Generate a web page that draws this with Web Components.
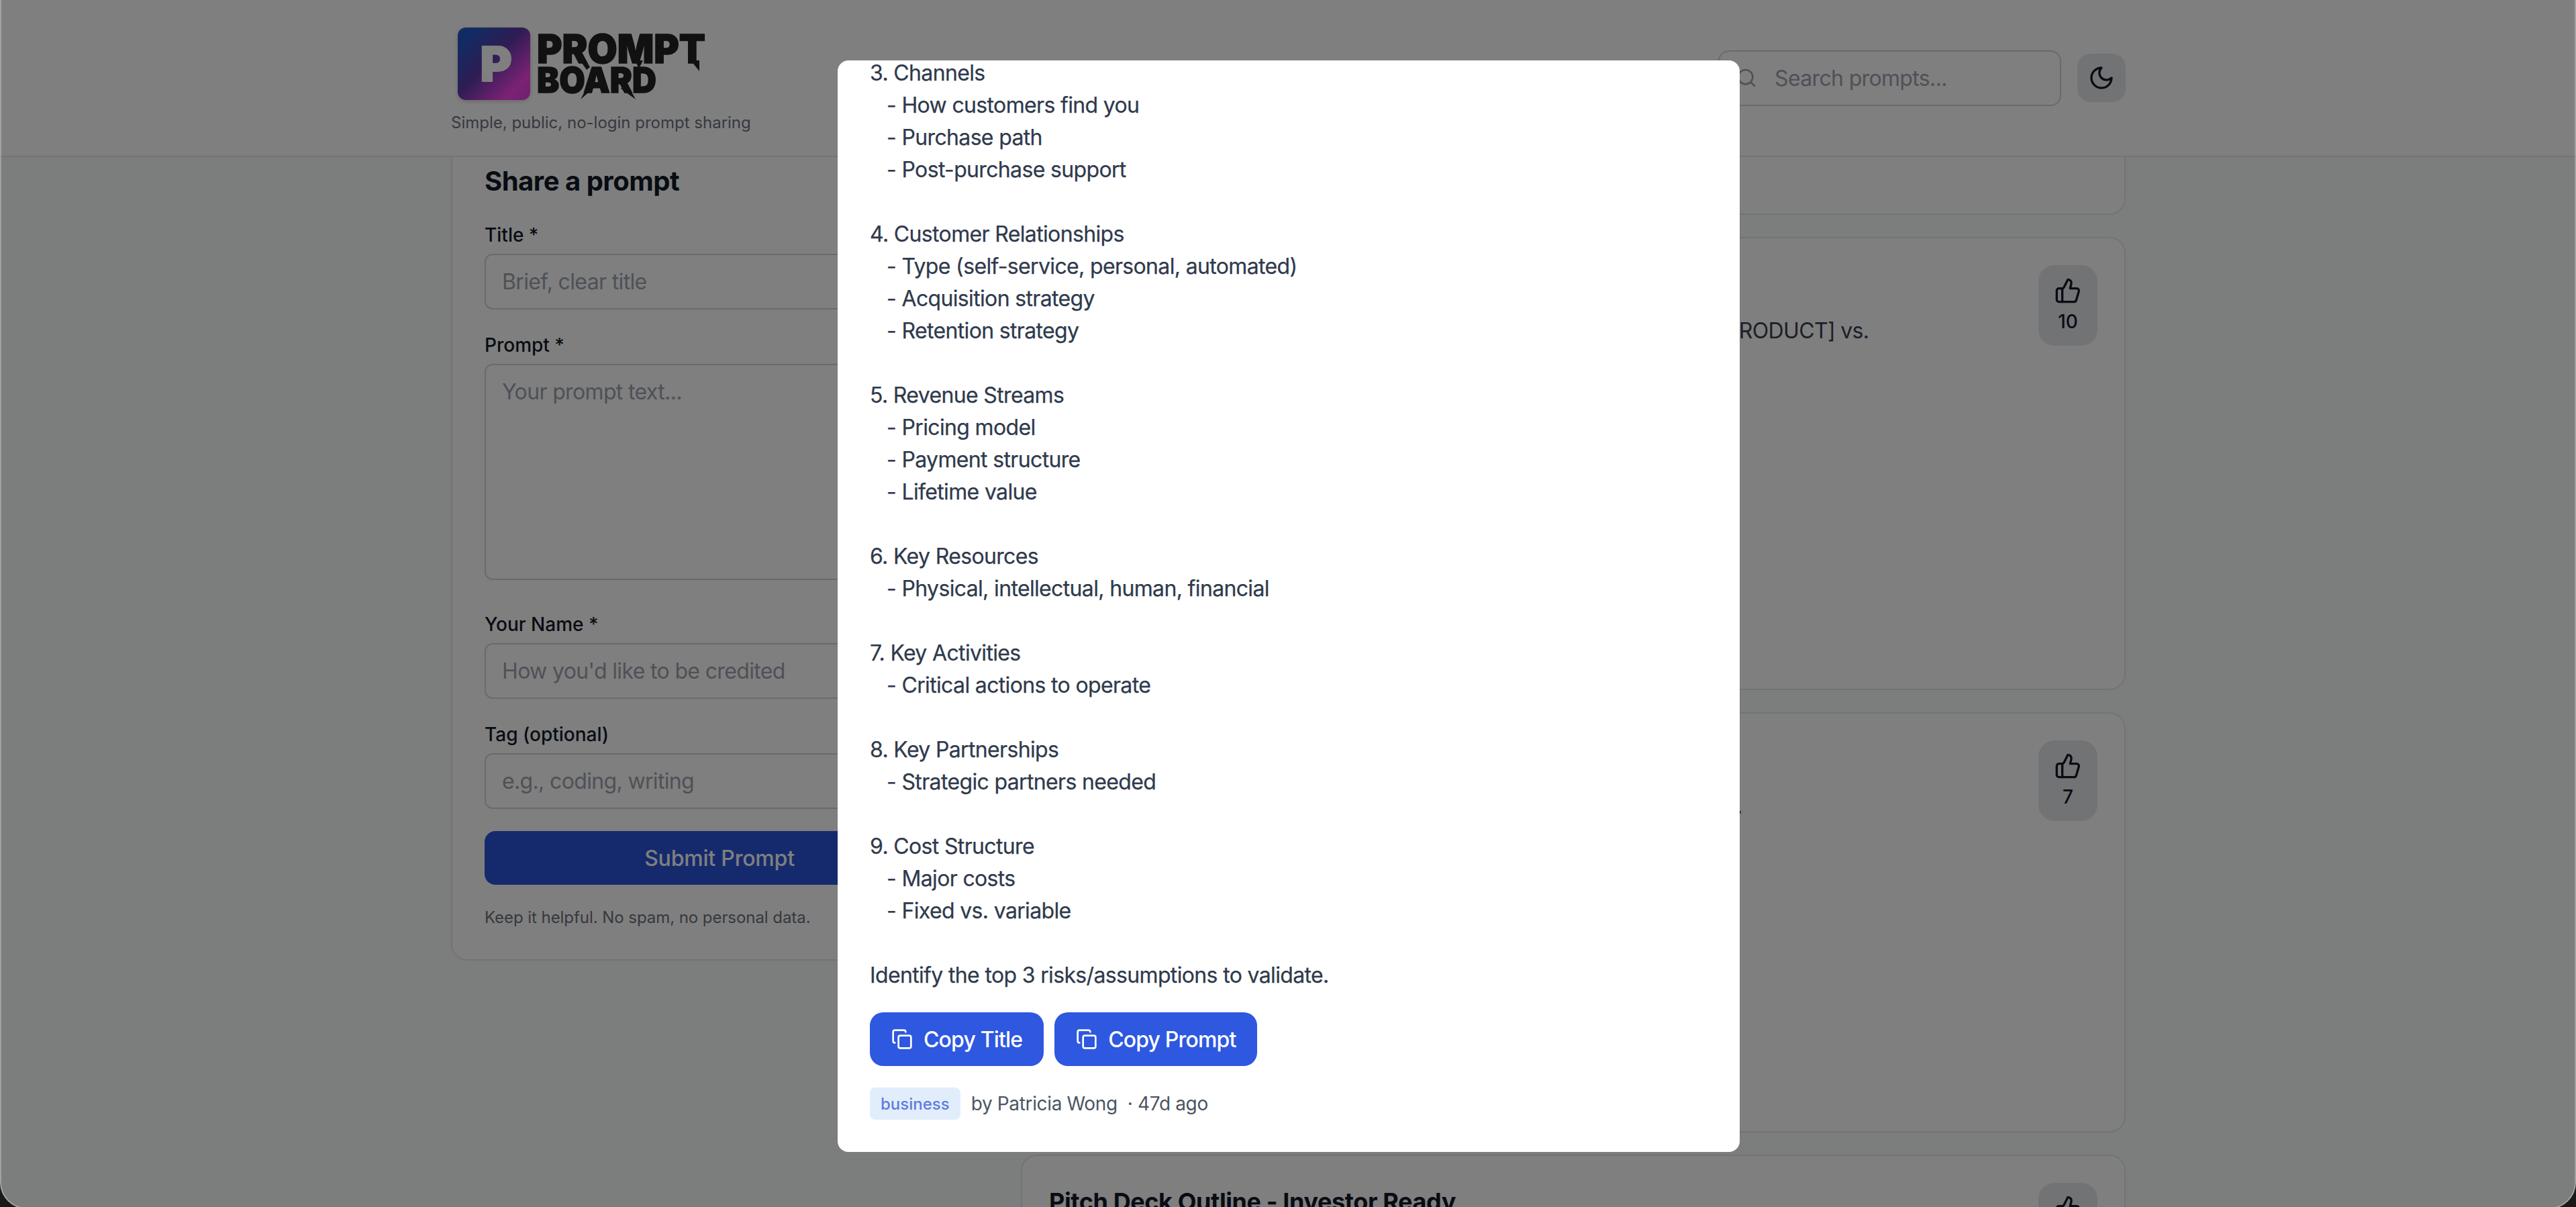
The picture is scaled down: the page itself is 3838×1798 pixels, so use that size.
<!DOCTYPE html>
<html lang="en">
<head>
<meta charset="utf-8">
<title>Prompt Board</title>
<style>
  html, body { margin: 0; height: 100%; overflow: hidden; }
  body { position: relative; background: #f9fafb; color: #111827; font-family: Inter, "Liberation Sans", sans-serif; }
</style>
</head>
<body>
  <app-header></app-header>
  <app-main>
    <share-form slot="side"></share-form>
    <prompt-card height="128"></prompt-card>
    <prompt-card height="675" votes="10" indent="997" text="[PRODUCT] vs."></prompt-card>
    <prompt-card height="626" votes="7" indent="1024" text="."></prompt-card>
    <prompt-card height="400" title="Pitch Deck Outline - Investor Ready" votes=""></prompt-card>
  </app-main>
  <prompt-modal tag="business" author="Patricia Wong" age="47d ago">3. Channels
   - How customers find you
   - Purchase path
   - Post-purchase support

4. Customer Relationships
   - Type (self-service, personal, automated)
   - Acquisition strategy
   - Retention strategy

5. Revenue Streams
   - Pricing model
   - Payment structure
   - Lifetime value

6. Key Resources
   - Physical, intellectual, human, financial

7. Key Activities
   - Critical actions to operate

8. Key Partnerships
   - Strategic partners needed

9. Cost Structure
   - Major costs
   - Fixed vs. variable

Identify the top 3 risks/assumptions to validate.</prompt-modal>
  <window-frame></window-frame>

<script>
// Lucide style icons shared by the components
const svgIcon = (size, body, width = 2) => `<svg xmlns="http://www.w3.org/2000/svg" width="${size}" height="${size}" viewBox="0 0 24 24" fill="none" stroke="currentColor" stroke-width="${width}" stroke-linecap="round" stroke-linejoin="round">${body}</svg>`;
const ICONS = {
  search: '<circle cx="11" cy="11" r="8"/><path d="m21 21-4.3-4.3"/>',
  moon: '<path d="M12 3a6 6 0 0 0 9 9 9 9 0 1 1-9-9Z"/>',
  thumb: '<path d="M7 10v12"/><path d="M15 5.88 14 10h5.83a2 2 0 0 1 1.92 2.56l-2.33 8A2 2 0 0 1 17.5 22H4a2 2 0 0 1-2-2v-8a2 2 0 0 1 2-2h2.76a2 2 0 0 0 1.79-1.11L12 2a3.13 3.13 0 0 1 3 3.88Z"/>',
  copy: '<rect width="14" height="14" x="8" y="8" rx="2" ry="2"/><path d="M4 16c-1.1 0-2-.9-2-2V4c0-1.1.9-2 2-2h10c1.1 0 2 .9 2 2"/>'
};

const logoTemplate = document.createElement('template');
logoTemplate.innerHTML = `
<style>
  :host { display: flex; align-items: flex-start; gap: 10px; margin-left: 10px; height: 108px; }
  .tile {
    box-sizing: border-box; width: 108px; height: 108px; border-radius: 12px; padding-left: 6px;
    background: linear-gradient(135deg, #2358c8 12%, #5a3aa8 45%, #f844ea 82%, #e040e0);
    box-shadow: 0 2px 6px rgba(0,0,0,.18);
    display: flex; align-items: center; justify-content: center;
    color: #fff; font: 900 72px/1 Inter, sans-serif;
    -webkit-text-stroke: 2px #fff;
  }
  svg { display: block; margin: -20px 0; flex: none; }
  text { font-family: Inter, sans-serif; font-weight: 900; fill: #222; stroke: #222; }
</style>
<div class="tile">P</div>
<svg width="256" height="148" viewBox="800 21 256 148">
  <text x="800" y="94" font-size="59" stroke-width="1.5" textLength="251" lengthAdjust="spacingAndGlyphs">PROMPT</text>
  <text x="800" y="138" font-size="52" stroke-width="1.5" textLength="178" lengthAdjust="spacingAndGlyphs">BOARD</text>
  <polygon points="856,78 866,78 879,100 874,104" fill="#222"/>
  <polygon points="946,90 958,90 952,102" fill="#222"/>
  <polygon points="1029,90 1042,90 1042,106" fill="#222"/>
  <polygon points="880,120 888,128 865,148" fill="#222"/>
  <polygon points="925,132 935,126 947,148" fill="#222"/>
</svg>
`;
class BrandLogo extends HTMLElement {
  constructor() {
    super();
    this.attachShadow({ mode: 'open' }).appendChild(logoTemplate.content.cloneNode(true));
  }
}
customElements.define('brand-logo', BrandLogo);

const searchTemplate = document.createElement('template');
searchTemplate.innerHTML = `
<style>
  :host { display: block; position: relative; width: 511px; height: 83px; }
  input {
    box-sizing: border-box; width: 100%; height: 100%; padding: 0 24px 0 82px;
    border: 2px solid #d1d5db; border-radius: 16px; background: #fff;
    font: 32px Inter, sans-serif; letter-spacing: -.65px; color: #111827; outline: none;
  }
  input::placeholder { color: #9ca3af; opacity: 1; }
  span { position: absolute; left: 26px; top: 25px; color: #9ca3af; display: flex; }
</style>
<span>${svgIcon(32, ICONS.search)}</span>
<input type="text" placeholder="Search prompts...">
`;
class SearchBox extends HTMLElement {
  constructor() {
    super();
    this.attachShadow({ mode: 'open' }).appendChild(searchTemplate.content.cloneNode(true));
  }
}
customElements.define('search-box', SearchBox);

const headerTemplate = document.createElement('template');
headerTemplate.innerHTML = `
<style>
  /* the header stays on top while the page scrolls under it */
  :host {
    display: block; position: absolute; top: 0; left: 0; right: 0; z-index: 10;
    height: 232px; background: #fff; border-bottom: 2px solid #e5e7eb;
  }
  .inner {
    box-sizing: border-box; width: 2560px; height: 100%; margin: 0 auto; padding: 0 32px 0 33px;
    display: flex; justify-content: space-between; align-items: center;
  }
  .brand { padding-top: 41px; align-self: flex-start; }
  p { margin: 16px 0 0; font-size: 24px; line-height: 36px; color: #6b7280; }
  .tools { display: flex; align-items: center; gap: 24px; }
  button {
    width: 72px; height: 72px; border: 0; border-radius: 20px; padding: 0;
    background: #e5e7eb; color: #111827;
    display: flex; align-items: center; justify-content: center;
  }
</style>
<div class="inner">
  <div class="brand">
    <brand-logo></brand-logo>
    <p>Simple, public, no-login prompt sharing</p>
  </div>
  <div class="tools">
    <search-box></search-box>
    <button aria-label="Toggle theme">${svgIcon(40, ICONS.moon)}</button>
  </div>
</div>
`;
class AppHeader extends HTMLElement {
  constructor() {
    super();
    this.attachShadow({ mode: 'open' }).appendChild(headerTemplate.content.cloneNode(true));
  }
}
customElements.define('app-header', AppHeader);

const mainTemplate = document.createElement('template');
mainTemplate.innerHTML = `
<style>
  :host {
    display: block; box-sizing: border-box; width: 2560px; margin: 0 auto;
    padding: 192px 32px 0 33px;
  }
  .grid { display: grid; grid-template-columns: 800px 1646px; column-gap: 49px; align-items: start; }
  .list { display: flex; flex-direction: column; gap: 33px; }
</style>
<div class="grid">
  <slot name="side"></slot>
  <div class="list"><slot></slot></div>
</div>
`;
class AppMain extends HTMLElement {
  constructor() {
    super();
    this.attachShadow({ mode: 'open' }).appendChild(mainTemplate.content.cloneNode(true));
  }
}
customElements.define('app-main', AppMain);

const fieldTemplate = document.createElement('template');
fieldTemplate.innerHTML = `
<style>
  :host { display: block; }
  label { display: block; font-size: 28px; line-height: 40px; font-weight: 500; color: #111827; margin-bottom: 8px; }
  input, textarea {
    box-sizing: border-box; display: block; width: 100%; margin: 0;
    border: 2px solid #d1d5db; border-radius: 12px; background: #fff;
    padding: 0 24px; font: 32px/39px Inter, sans-serif; letter-spacing: -.65px; color: #111827; outline: none; resize: none;
  }
  input { height: 83px; }
  textarea { height: 322px; padding-top: 20px; }
  ::placeholder { color: #9ca3af; opacity: 1; }
</style>
<label></label>
`;
class FormField extends HTMLElement {
  constructor() {
    super();
    const shadow = this.attachShadow({ mode: 'open' });
    shadow.appendChild(fieldTemplate.content.cloneNode(true));
    shadow.querySelector('label').textContent = this.getAttribute('label');
    const control = document.createElement(this.hasAttribute('multiline') ? 'textarea' : 'input');
    control.placeholder = this.getAttribute('placeholder');
    shadow.appendChild(control);
  }
}
customElements.define('form-field', FormField);

const formTemplate = document.createElement('template');
formTemplate.innerHTML = `
<style>
  :host {
    display: block; box-sizing: border-box; height: 1239px; padding: 48px;
    background: #fff; border: 2px solid #e5e7eb; border-radius: 24px;
  }
  h2 { margin: 0 0 32px; font-size: 40px; line-height: 56px; font-weight: 700; color: #111827; letter-spacing: -.5px; }
  form { display: flex; flex-direction: column; gap: 33px; }
  form-field[multiline] { margin-bottom: 13px; }
  button {
    height: 80px; border: 0; border-radius: 16px; background: #2a54da; color: #fff;
    font: 500 32px Inter, sans-serif; letter-spacing: -.2px;
  }
  p { margin: 0; font-size: 24px; line-height: 32px; color: #6b7280; letter-spacing: -.06px; }
</style>
<h2>Share a prompt</h2>
<form>
  <form-field label="Title *" placeholder="Brief, clear title"></form-field>
  <form-field label="Prompt *" placeholder="Your prompt text..." multiline></form-field>
  <form-field label="Your Name *" placeholder="How you'd like to be credited"></form-field>
  <form-field label="Tag (optional)" placeholder="e.g., coding, writing"></form-field>
  <button type="button">Submit Prompt</button>
  <p>Keep it helpful. No spam, no personal data.</p>
</form>
`;
class ShareForm extends HTMLElement {
  constructor() {
    super();
    this.attachShadow({ mode: 'open' }).appendChild(formTemplate.content.cloneNode(true));
  }
}
customElements.define('share-form', ShareForm);

const voteTemplate = document.createElement('template');
voteTemplate.innerHTML = `
<style>
  :host {
    box-sizing: border-box; display: flex; flex-direction: column; align-items: center;
    width: 88px; height: 120px; padding-top: 18px; flex: none;
    background: #e5e7eb; border-radius: 24px; color: #111827;
  }
  span { font-size: 28px; line-height: 40px; font-weight: 500; margin-top: 6px; }
</style>
${svgIcon(40, ICONS.thumb)}
<span></span>
`;
class VoteButton extends HTMLElement {
  constructor() {
    super();
    this.attachShadow({ mode: 'open' }).appendChild(voteTemplate.content.cloneNode(true));
  }
  connectedCallback() {
    this.shadowRoot.querySelector('span').textContent = this.getAttribute('count');
  }
}
customElements.define('vote-button', VoteButton);

const cardTemplate = document.createElement('template');
cardTemplate.innerHTML = `
<style>
  :host {
    display: flex; box-sizing: border-box; justify-content: space-between; gap: 32px;
    padding: 40px; background: #fff; border: 2px solid #e5e7eb; border-radius: 24px;
  }
  h3 { margin: 0 0 18px; min-height: 56px; font-size: 36px; line-height: 56px; font-weight: 700; color: #111827; letter-spacing: -.4px; }
  p { margin: 0; font-size: 32px; line-height: 48px; color: #374151; letter-spacing: -.65px; }
</style>
<div>
  <h3></h3>
  <p></p>
</div>
`;
class PromptCard extends HTMLElement {
  constructor() {
    super();
    const shadow = this.attachShadow({ mode: 'open' });
    shadow.appendChild(cardTemplate.content.cloneNode(true));
    this.style.height = this.getAttribute('height') + 'px';
    shadow.querySelector('h3').textContent = this.getAttribute('title');
    const text = shadow.querySelector('p');
    text.textContent = this.getAttribute('text');
    // most of the text sits behind the dialog, only its tail shows
    text.style.paddingLeft = (this.getAttribute('indent') || 0) + 'px';
    if (this.hasAttribute('votes')) {
      const vote = document.createElement('vote-button');
      vote.setAttribute('count', this.getAttribute('votes'));
      shadow.appendChild(vote);
    }
  }
}
customElements.define('prompt-card', PromptCard);

const copyTemplate = document.createElement('template');
copyTemplate.innerHTML = `
<style>
  :host { display: inline-block; }
  button {
    display: flex; align-items: center; gap: 16px; height: 80px; padding: 0 32px;
    border: 0; border-radius: 20px; background: #2e58e0; color: #fff;
    font: 500 32px Inter, sans-serif; letter-spacing: -.85px;
  }
</style>
<button>${svgIcon(32, ICONS.copy)}<slot></slot></button>
`;
class CopyButton extends HTMLElement {
  constructor() {
    super();
    this.attachShadow({ mode: 'open' }).appendChild(copyTemplate.content.cloneNode(true));
  }
}
customElements.define('copy-button', CopyButton);

const modalTemplate = document.createElement('template');
modalTemplate.innerHTML = `
<style>
  /* backdrop over the whole page, the dialog sits in it */
  :host {
    box-sizing: border-box; position: absolute; inset: 0; z-index: 20;
    display: flex; align-items: flex-start; justify-content: center;
    padding: 90px 0 0 2px; background: rgba(0,0,0,.5);
  }
  .dialog {
    box-sizing: border-box; width: 1344px; height: 1626px; padding: 0 48px 48px;
    background: #fff; border-radius: 16px; overflow: hidden;
    display: flex; flex-direction: column; justify-content: flex-end;
  }
  .body {
    white-space: pre-wrap; font-size: 32px; line-height: 48px; letter-spacing: -.65px;
    color: #2f3a4c; -webkit-text-stroke: .25px #2f3a4c; flex: none;
  }
  .actions { display: flex; gap: 16px; margin-top: 31px; flex: none; }
  .meta { display: flex; align-items: center; gap: 16px; margin-top: 32px; flex: none; font-size: 28px; letter-spacing: -.35px; color: #4b5563; }
  .tag {
    box-sizing: border-box; height: 48px; padding: 0 16px; border-radius: 8px;
    display: flex; align-items: center; letter-spacing: 0;
    background: #e2edfc; color: #5d7ce0; font-size: 24px; font-weight: 500;
  }
  .who { white-space: pre; }
</style>
<div class="dialog">
  <div class="body"><slot></slot></div>
  <div class="actions">
    <copy-button>Copy Title</copy-button>
    <copy-button>Copy Prompt</copy-button>
  </div>
  <div class="meta"><span class="tag"></span><span class="who"></span></div>
</div>
`;
class PromptModal extends HTMLElement {
  constructor() {
    super();
    const shadow = this.attachShadow({ mode: 'open' });
    shadow.appendChild(modalTemplate.content.cloneNode(true));
    shadow.querySelector('.tag').textContent = this.getAttribute('tag');
    shadow.querySelector('.who').textContent = `by ${this.getAttribute('author')}  · ${this.getAttribute('age')}`;
  }
}
customElements.define('prompt-modal', PromptModal);

const frameTemplate = document.createElement('template');
frameTemplate.innerHTML = `
<style>
  /* rounded corners of the captured browser window, wallpaper behind them */
  :host { position: absolute; inset: 0; z-index: 30; overflow: hidden; pointer-events: none; display: block; }
  div {
    position: absolute; left: 0; right: 0; top: -60px; bottom: -3px;
    border: 2px solid rgba(255,255,255,.28); border-radius: 40px;
    box-shadow: 0 0 0 60px #1a1917;
  }
</style>
<div></div>
`;
class WindowFrame extends HTMLElement {
  constructor() {
    super();
    this.attachShadow({ mode: 'open' }).appendChild(frameTemplate.content.cloneNode(true));
  }
}
customElements.define('window-frame', WindowFrame);
</script>
</body>
</html>
